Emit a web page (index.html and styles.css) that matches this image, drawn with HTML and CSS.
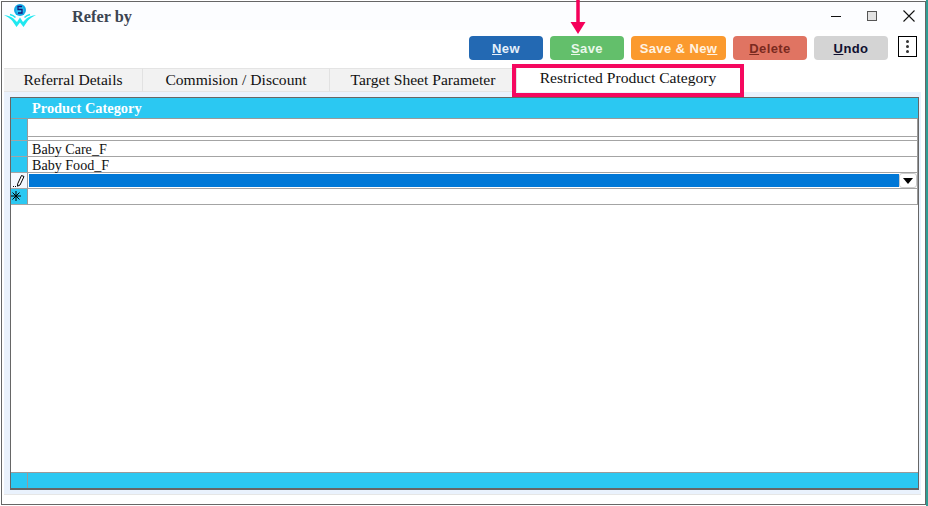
FILE: index.html
```
<!DOCTYPE html>
<html lang="en">
<head>
<meta charset="utf-8">
<title>Refer by</title>
<link rel="stylesheet" href="styles.css">
</head>
<body>
<div class="window">
  <header class="titlebar">
    <svg class="logo" width="34" height="28" viewBox="0 0 34 28">
      <circle cx="16" cy="8" r="6" fill="#12a8e6"/>
      <circle cx="16" cy="8" r="3.800" fill="#2fc4f0"/>
      <path d="M18 4.500h-4v3h4v3.500h-4" fill="none" stroke="#16167a" stroke-width="1.300"/>
      <path d="M0 13c4 .5 7 1.500 9.500 3.500L13 20l3-4.500 3 4.500 3.500-3.500C25 14.500 28 13.500 32 13c-3 1.500-6 3.500-8 5.500L19.500 25 16 20.500 12.500 25 8 18.500C6 16.500 3 14.500 0 13z" fill="#1fe8f0"/>
      <path d="M6 12.500c2 .5 4 1.500 5.500 3M26 12.500c-2 .5-4 1.500-5.500 3" fill="none" stroke="#1fe8f0" stroke-width="1.500"/>
    </svg>
    <span class="title">Refer by</span>
    <div class="winctl">
      <span class="minimize"></span>
      <span class="maximize"></span>
      <svg class="close" width="12" height="12" viewBox="0 0 12 12"><path d="M.5.5l11 11M11.500.5l-11 11" stroke="#111" stroke-width="1.100"/></svg>
    </div>
  </header>
  <div class="toolbar">
    <button class="btn btn-new"><u>N</u>ew</button>
    <button class="btn btn-save"><u>S</u>ave</button>
    <button class="btn btn-savenew">Save &amp; Ne<u>w</u></button>
    <button class="btn btn-delete"><u>D</u>elete</button>
    <button class="btn btn-undo"><u>U</u>ndo</button>
    <button class="more"><i></i><i></i><i></i></button>
  </div>
  <nav class="tabs">
    <span class="tab tab-1">Referral Details</span>
    <span class="tab tab-2">Commision / Discount</span>
    <span class="tab tab-3">Target Sheet Parameter</span>
    <span class="tab tab-active">Restricted Product Category</span>
  </nav>
  <main class="panel">
    <div class="grid">
      <div class="row row-head"><span class="rh"></span><span class="cell">Product Category</span></div>
      <div class="row row-blank"><span class="rh"></span><span class="cell"></span></div>
      <div class="row"><span class="rh"></span><span class="cell">Baby Care_F</span></div>
      <div class="row"><span class="rh"></span><span class="cell">Baby Food_F</span></div>
      <div class="row row-edit">
        <span class="rh rh-edit">
          <svg width="13" height="14" viewBox="0 0 13 14"><path d="M8.500 1.500l2.500 1L7 11l-2.500 1.200L4.700 9.800z" fill="#fff" stroke="#000" stroke-width="1"/><path d="M0 12.500h1M2 12.500h1" stroke="#000"/></svg>
        </span>
        <span class="cell"><span class="selected"></span><span class="drop"><svg width="10" height="6" viewBox="0 0 10 6"><path d="M0 0h10L5 6z" fill="#000"/></svg></span></span>
      </div>
      <div class="row"><span class="rh rh-new"><svg width="10" height="10" viewBox="0 0 10 10"><path d="M5 0v10M0 5h10M1.500 1.500l7 7M8.500 1.500l-7 7" stroke="#000" stroke-width="1"/></svg></span><span class="cell"></span></div>
      <div class="grid-space"></div>
      <div class="row row-foot"><span class="rh"></span><span class="cell"></span></div>
    </div>
  </main>
  <div class="highlight"></div>
  <svg class="arrow" width="16" height="34" viewBox="0 0 16 34"><path d="M8 0v24" stroke="#f5005a" stroke-width="3.500"/><path d="M0.500 22h15L8 34z" fill="#f5005a"/></svg>
</div>
</body>
</html>
```
FILE: styles.css
```
* { box-sizing: border-box; }
html, body { margin: 0; padding: 0; }
body {
  width: 928px;
  height: 506px;
  background: #fff;
  overflow: hidden;
  border-right: 2px solid #2f9d93;
  font-family: "Liberation Serif", serif;
}
.window {
  position: relative;
  width: 925px;
  height: 504px;
  margin: 1px 0 0 1px;
  border: 1px solid #666;
  background: #fff;
  display: flex;
  flex-direction: column;
}
.titlebar {
  height: 28px;
  flex: none;
  display: flex;
  align-items: center;
  background: #fcfdff;
}
.logo { margin-left: 2px; flex: none; }
.title {
  margin-left: 34px;
  padding-top: 2px;
  font-weight: 700;
  font-size: 16.300px;
  color: #3c4552;
}
.winctl { margin-left: auto; display: flex; align-items: center; }
.minimize { width: 10px; height: 1px; background: #111; margin-right: 26px; }
.maximize { width: 10px; height: 10px; background: #e2e2e2; border: 1px solid #555; margin-right: 26px; }
.close { margin-right: 10px; }
.toolbar {
  height: 38px;
  flex: none;
  display: flex;
  align-items: flex-start;
  padding: 6px 0 0 467px;
  gap: 7px;
}
.btn {
  width: 74px;
  height: 24px;
  padding: 0;
  border: 0;
  border-radius: 4px;
  font-family: "Liberation Sans", sans-serif;
  font-weight: 700;
  font-size: 13px;
  letter-spacing: .4px;
  line-height: 25px;
  text-align: center;
}
.btn-new { background: #2369b3; color: #e6f0fa; }
.btn-save { background: #63bf6b; color: #eaf8ea; }
.btn-savenew { width: 95px; background: #fb9a2e; color: #fff3e2; }
.btn-delete { background: #e07462; color: #7a2a20; }
.btn-undo { background: #d4d4d4; color: #101030; }
.more {
  width: 19px;
  height: 21px;
  margin-left: 3px;
  padding: 0;
  background: #fff;
  border: 1px solid #000;
  display: flex;
  flex-direction: column;
  align-items: center;
  justify-content: center;
  gap: 2px;
}
.more i { width: 3px; height: 3px; background: #333; border-radius: 50%; }
.tabs {
  height: 24px;
  flex: none;
  display: flex;
  padding-left: 2px;
  font-size: 15.600px;
  color: #111;
}
.tab {
  display: block;
  text-align: center;
  line-height: 21px;
  background: #f2f2f2;
  border-top: 1px solid #e4e4e4;
  border-right: 1px solid #e2e2e2;
  border-bottom: 1px solid #e4e4e4;
}
.tab-1 { width: 139px; }
.tab-2 { width: 187px; }
.tab-3 { width: 187px; }
.tab-active {
  width: 222px;
  background: #fff;
  border: 0;
  line-height: 20px;
}
.panel {
  flex: 1;
  margin: 0 0 9px 2px;
  width: 917px;
  background: #eaf2fd;
  padding: 5px 0 4px 6px;
  display: flex;
  border-bottom: 1px solid #e6e6e6;
}
.grid {
  width: 909px;
  border: 1px solid #666;
  border-bottom-width: 2px;
  background: #fff;
  display: flex;
  flex-direction: column;
  font-size: 14.100px;
  color: #111;
}
.row {
  height: 16px;
  flex: none;
  display: flex;
  line-height: 16px;
}
.rh {
  width: 17px;
  flex: none;
  background: #2bc8f2;
  border-right: 1px solid #9a9a9a;
  border-bottom: 1px solid #a4a4a4;
  display: flex;
  align-items: center;
}
.cell {
  flex: 1;
  padding-left: 4px;
  display: flex;
  border-right: 1px solid #9a9a9a;
  border-bottom: 1px solid #a4a4a4;
}
.row-head { height: 21px; }
.row-head .rh { border-right-color: #2bc8f2; border-bottom-color: #9a9a9a; }
.row-head .cell {
  background: #2bc8f2;
  color: #fff;
  font-size: 14.400px;
  font-weight: 700;
  line-height: 20px;
  border-right: 0;
  border-bottom-color: #9a9a9a;
}
.row-blank { height: 22px; }
.row-blank .cell { box-shadow: inset 0 -3px 0 #fff, inset 0 -4px 0 #a4a4a4; }
.rh-edit { background: #f3f8fe; padding-left: 2px; }
.rh-new { padding-bottom: 2px; }
.row-edit .cell { padding: 1px 0 0 1px; }
.selected { flex: 1; height: 13px; background: #0078d7; }
.drop {
  width: 18px;
  height: 15px;
  margin-top: -1px;
  background: #fff;
  border: 1px solid #ccc;
  border-radius: 3px;
  display: flex;
  align-items: center;
  justify-content: center;
}
.grid-space { flex: 1; }
.row-foot .rh { border-top: 1px solid #9a9a9a; border-bottom: 0; }
.row-foot .cell { background: #2bc8f2; border-top: 1px solid #9a9a9a; border-bottom: 0; border-right: 0; }
.highlight {
  position: absolute;
  left: 510px;
  top: 62px;
  width: 232px;
  height: 33px;
  border: 4px solid #f5085f;
  pointer-events: none;
}
.arrow { position: absolute; left: 568px; top: -2px; }
```
